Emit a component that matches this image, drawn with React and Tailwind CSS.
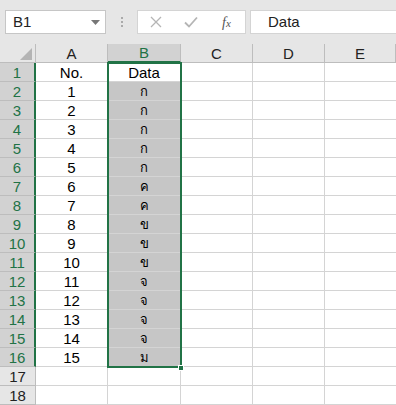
import React from "react";

const colA = ["No.", "1", "2", "3", "4", "5", "6", "7", "8", "9", "10", "11", "12", "13", "14", "15", "", ""];
const colB = ["Data", "ก", "ก", "ก", "ก", "ก", "ค", "ค", "ข", "ข", "ข", "จ", "จ", "จ", "จ", "ม", "", ""];

function Toolbar() {
  return (
    <div className="flex h-[44px] items-start bg-[#e6e6e6] pt-[10px]">
      {/* name box */}
      <div className="ml-[5px] flex h-[24px] w-[101px] items-center justify-between border border-[#c6c6c6] bg-white pl-[7px] pr-[5px] text-[15px] text-[#222]">
        <span>B1</span>
        <svg width="9" height="5" viewBox="0 0 9 5">
          <path d="M0 0h9L4.5 5z" fill="#777" />
        </svg>
      </div>
      <div className="flex h-[24px] w-[31px] flex-col items-center justify-center gap-[2px]">
        <span className="block h-[2px] w-[2px] bg-[#aaa]" />
        <span className="block h-[2px] w-[2px] bg-[#aaa]" />
        <span className="block h-[2px] w-[2px] bg-[#aaa]" />
      </div>
      {/* formula buttons */}
      <div className="flex h-[24px] w-[109px] items-center border border-[#d4d4d4] bg-white">
        <div className="flex w-[36px] justify-center">
          <svg width="12" height="12" viewBox="0 0 12 12">
            <path d="M1 1l10 10M11 1L1 11" stroke="#b5b5b5" strokeWidth="1.3" />
          </svg>
        </div>
        <div className="flex w-[34px] justify-center">
          <svg width="14" height="12" viewBox="0 0 14 12">
            <path d="M1 6.5l4 4L13 1.5" stroke="#b5b5b5" strokeWidth="1.8" fill="none" />
          </svg>
        </div>
        <div className="flex flex-1 justify-center font-['Liberation_Serif',serif] text-[14px] italic text-[#555]">
          <span>f<span className="text-[11px]">x</span></span>
        </div>
      </div>
      {/* formula input */}
      <div className="ml-[4px] flex h-[24px] flex-1 items-center border border-r-0 border-[#d4d4d4] bg-white pl-[17px] text-[15px] text-[#222]">
        Data
      </div>
    </div>
  );
}

function Sheet() {
  const cols = ["A", "B", "C", "D", "E"];
  return (
    <div className="relative grid grid-cols-[36px_72px_73px_72px_72px_1fr] grid-rows-[19px] auto-rows-[19px] text-[15px]">
      {/* corner */}
      <div className="relative border-b border-r border-[#bdbdbd] bg-[#e6e6e6]">
        <svg className="absolute bottom-[2px] right-[3px]" width="12" height="12" viewBox="0 0 12 12">
          <path d="M12 0v12H0z" fill="#b4b4b4" />
        </svg>
      </div>
      {cols.map((c) => (
        <div
          key={c}
          className={
            c === "B"
              ? "flex items-center justify-center border-b-2 border-r border-b-[#217346] border-r-[#bdbdbd] bg-[#d2d2d2] leading-none text-[#217346]"
              : "flex items-center justify-center border-b border-r border-[#bdbdbd] bg-[#e6e6e6] leading-none text-[#222]"
          }
        >
          {c}
        </div>
      ))}
      {colA.map((a, i) => {
        const sel = i < 16;
        return (
          <React.Fragment key={i}>
            <div
              className={
                sel
                  ? "flex items-center justify-center border-b border-r-2 border-b-[#bdbdbd] border-r-[#217346] bg-[#d2d2d2] leading-none text-[#217346]"
                  : "flex items-center justify-center border-b border-r border-[#bdbdbd] bg-[#e6e6e6] leading-none text-[#222]"
              }
            >
              {i + 1}
            </div>
            <div className="flex items-center justify-center border-b border-r border-[#d4d4d4] bg-white leading-none text-black">
              {a}
            </div>
            <div
              className={
                i === 0
                  ? "flex items-center justify-center border-b border-r border-[#d4d4d4] bg-white leading-none text-black"
                  : sel
                  ? "flex items-center justify-center border-b border-r border-[#d4d4d4] bg-[#c6c6c6] text-[13px] leading-none text-black"
                  : "flex items-center justify-center border-b border-r border-[#d4d4d4] bg-white leading-none"
              }
            >
              {colB[i]}
            </div>
            <div className="border-b border-r border-[#d4d4d4] bg-white" />
            <div className="border-b border-r border-[#d4d4d4] bg-white" />
            <div className="border-b border-[#d4d4d4] bg-white" />
          </React.Fragment>
        );
      })}
      {/* selection outline B1:B16 */}
      <div className="pointer-events-none absolute left-[107px] top-[18px] h-[306px] w-[75px] border-2 border-[#217346]" />
      <div className="pointer-events-none absolute left-[178px] top-[321px] h-[6px] w-[6px] border border-white bg-[#217346]" />
    </div>
  );
}

export default function App() {
  return (
    <div className="h-[405px] w-[396px] overflow-hidden bg-white font-['Liberation_Sans','Noto_Sans',sans-serif]">
      <Toolbar />
      <Sheet />
    </div>
  );
}
